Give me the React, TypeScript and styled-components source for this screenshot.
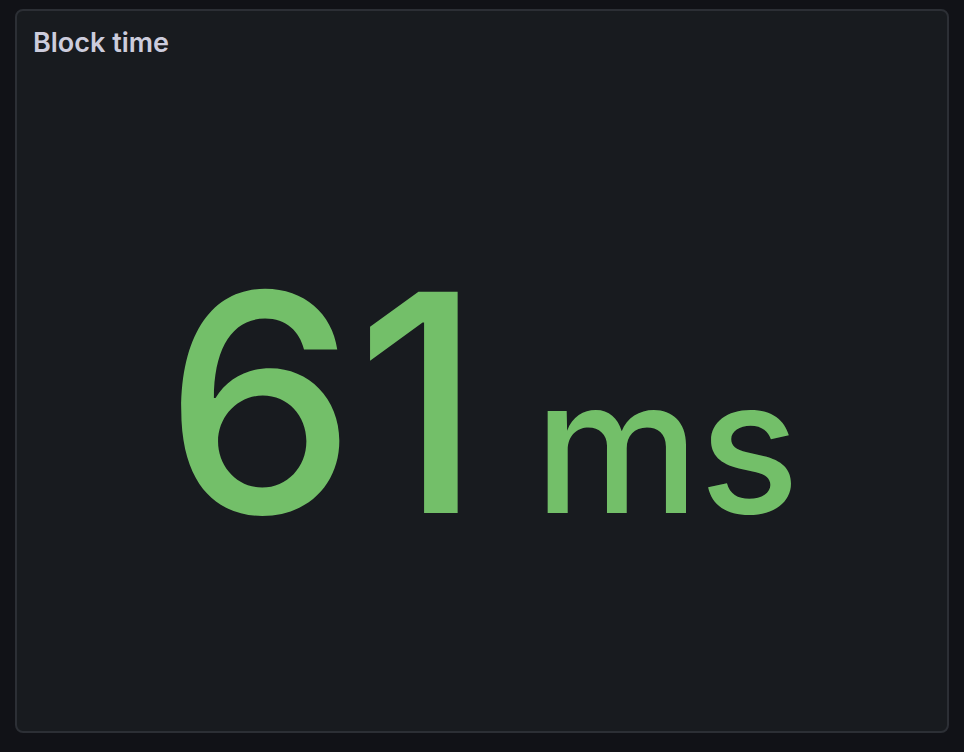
import React from "react";
import styled, { createGlobalStyle } from "styled-components";

const Global = createGlobalStyle`
  html, body { margin: 0; padding: 0; background: #111217; }
  body { font-family: Inter, "Liberation Sans", sans-serif; }
`;

const Page = styled.div`
  width: 964px;
  height: 752px;
  box-sizing: border-box;
  padding: 9px 15px 19px 15px;
  background: #111217;
`;

const Panel = styled.section`
  height: 100%;
  box-sizing: border-box;
  background: #181b1f;
  border: 2px solid #2c2f35;
  border-radius: 8px;
  display: flex;
  flex-direction: column;
`;

const Header = styled.header`
  height: 62px;
  padding: 0 0 0 16px;
  display: flex;
  align-items: center;
`;

const Title = styled.h2`
  margin: 0;
  font-family: Inter, sans-serif;
  font-size: 27px;
  font-weight: 600;
  color: #ccccdc;
  letter-spacing: 0;
`;

const Body = styled.div`
  flex: 1;
  display: flex;
  align-items: center;
  justify-content: center;
`;

const ValueLine = styled.div`
  display: flex;
  align-items: baseline;
  color: #73bf69;
  font-family: Inter, sans-serif;
  font-weight: 500;
  line-height: 1;
`;

const Value = styled.span`
  font-size: 304px;
`;

const Unit = styled.span`
  font-size: 186px;
  margin-left: 52px;
`;

export default function App() {
  return (
    <Page>
      <Global />
      <Panel>
        <Header>
          <Title>Block time</Title>
        </Header>
        <Body>
          <ValueLine>
            <Value>61</Value>
            <Unit>ms</Unit>
          </ValueLine>
        </Body>
      </Panel>
    </Page>
  );
}
